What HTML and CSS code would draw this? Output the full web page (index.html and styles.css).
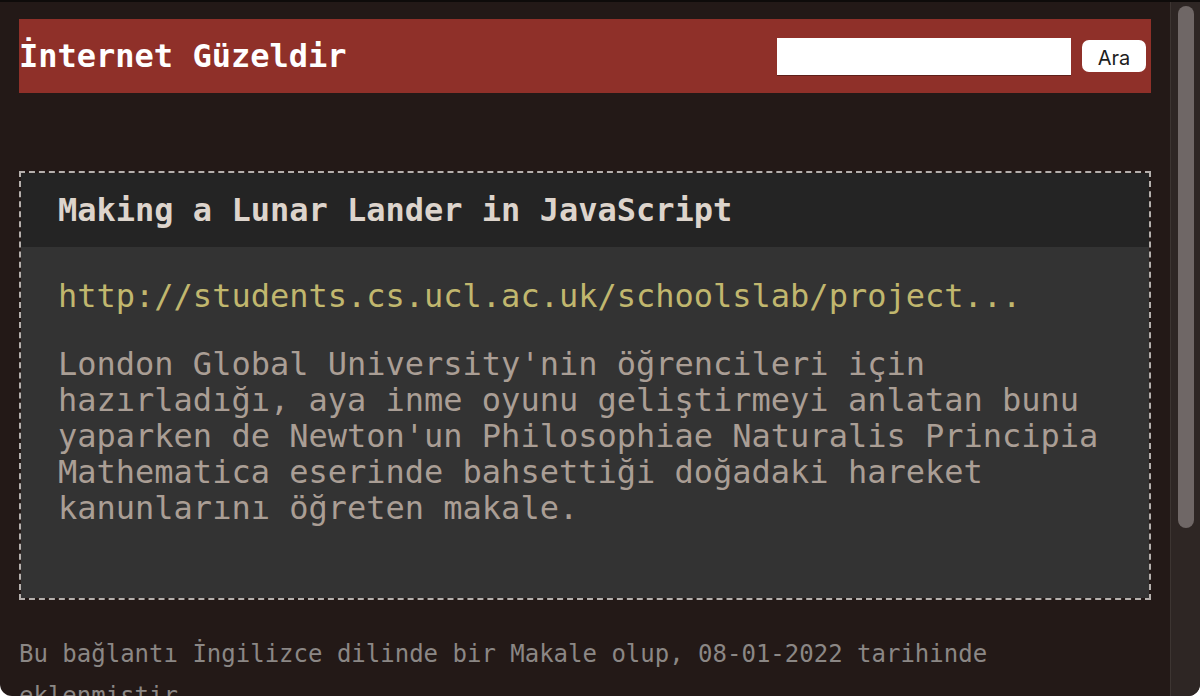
FILE: index.html
```html
<!DOCTYPE html>
<html lang="tr">
<head>
<meta charset="utf-8">
<title>İnternet Güzeldir</title>
<link rel="stylesheet" href="styles.css">
</head>
<body>
<div class="window">
  <div class="viewport">
    <div class="page">
      <header class="topbar">
        <h1 class="brand">İnternet Güzeldir</h1>
        <form class="search">
          <input class="search-input" type="text" aria-label="Ara">
          <button class="search-btn" type="button">Ara</button>
        </form>
      </header>

      <article class="card">
        <div class="card-head">
          <h2 class="card-title">Making a Lunar Lander in JavaScript</h2>
        </div>
        <div class="card-body">
          <p class="card-url">http://students.cs.ucl.ac.uk/schoolslab/project...</p>
          <p class="card-text">London Global University'nin öğrencileri için hazırladığı, aya inme oyunu geliştirmeyi anlatan bunu yaparken de Newton'un Philosophiae Naturalis Principia Mathematica eserinde bahsettiği doğadaki hareket kanunlarını öğreten makale.</p>
        </div>
      </article>

      <p class="meta">Bu bağlantı İngilizce dilinde bir Makale olup, 08-01-2022 tarihinde eklenmiştir.</p>
    </div>
  </div>
  <div class="scrollbar" aria-hidden="true">
    <div class="thumb"></div>
  </div>
</div>
</body>
</html>
```
FILE: styles.css
```css
html, body {
  margin: 0;
  padding: 0;
  height: 100%;
  background: #ffffff;
  overflow: hidden;
}

.window {
  box-sizing: border-box;
  display: flex;
  height: 100vh;
  border-top: 2px solid #0e0b0a;
  background: #231917;
  overflow: hidden;
  border-bottom-left-radius: 12px;
  border-bottom-right-radius: 12px;
  font-family: "DejaVu Sans Mono", "Liberation Mono", monospace;
}

.viewport {
  flex: 1;
  min-width: 0;
  overflow: hidden;
}

.scrollbar {
  box-sizing: border-box;
  flex: 0 0 30px;
  width: 30px;
  padding: 4px 6px 0 7px;
  background: #2e2624;
  border-left: 1px solid #3d3532;
}

.thumb {
  height: 522px;
  border-radius: 8px;
  background: #6f6766;
}

.page {
  padding: 17px 19px 40px;
}

.topbar {
  display: flex;
  align-items: center;
  justify-content: space-between;
  height: 74px;
  padding-right: 5px;
  background: #8f3029;
}

.brand {
  margin: 0;
  font-size: 32px;
  font-weight: bold;
  color: #ffffff;
  line-height: 1;
}

.search {
  display: flex;
  align-items: center;
  gap: 11px;
  margin: 0;
}

.search-input {
  box-sizing: border-box;
  width: 294px;
  height: 37px;
  border: none;
  margin: 0;
  padding: 0 6px;
  background: #ffffff;
  box-shadow: 0 1px 0 rgba(0, 0, 0, 0.35);
  outline: none;
}

.search-btn {
  box-sizing: border-box;
  width: 64px;
  height: 32px;
  margin: 0;
  padding: 3px 0 0;
  border: none;
  border-radius: 7px;
  background: #ffffff;
  color: #1d1d1d;
  font-family: Inter, "Liberation Sans", sans-serif;
  font-size: 20px;
  line-height: 1;
}

.card {
  margin-top: 78px;
  border: 2px dashed #b5b0ad;
}

.card-head {
  display: flex;
  align-items: center;
  height: 74px;
  padding: 0 37px;
  background: #242424;
}

.card-title {
  margin: 0;
  font-size: 32px;
  font-weight: bold;
  color: #ddd4cc;
  line-height: 1;
}

.card-body {
  background: #333333;
  padding: 31px 37px 72px;
}

.card-url {
  margin: 0 0 32px;
  font-size: 32px;
  line-height: 36px;
  color: #c1b76e;
}

.card-text {
  margin: 0;
  font-size: 32px;
  line-height: 36px;
  color: #aa9e95;
}

.meta {
  margin: 33px 0 0;
  font-size: 24px;
  line-height: 42px;
  color: #8b8785;
}
```
